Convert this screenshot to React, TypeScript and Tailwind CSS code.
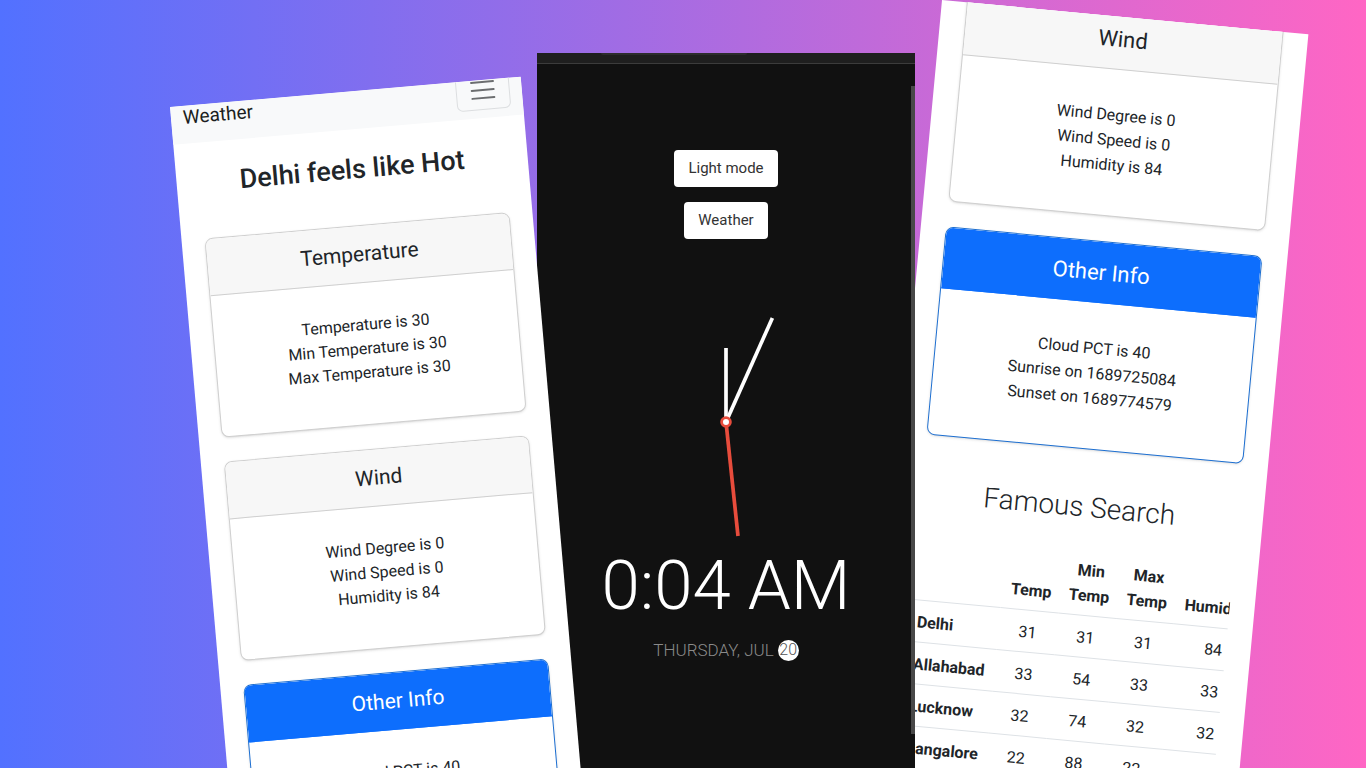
import type { ReactNode } from "react";

type Tone = "light" | "primary";

const tones: Record<Tone, { card: string; header: string }> = {
  light: { card: "border-[#cfcfcf]", header: "border-[#cfcfcf] bg-[#f7f7f7] text-[#212529]" },
  primary: { card: "border-[#1d6fd1]", header: "border-[#0d6efd] bg-[#0d6efd] text-white" },
};

const wind = ["Wind Degree is 0", "Wind Speed is 0", "Humidity is 84"];
const temperature = ["Temperature is 30", "Min Temperature is 30", "Max Temperature is 30"];
const other = ["Cloud PCT is 40", "Sunrise on 1689725084", "Sunset on 1689774579"];

const cities = [
  { name: "Delhi", values: [31, 31, 31, 84] },
  { name: "Allahabad", values: [33, 54, 33, 33] },
  { name: "Lucknow", values: [32, 74, 32, 32] },
  { name: "Bangalore", values: [22, 88, 22, 22] },
];

function InfoCard({ title, lines, tone = "light" }: { title: string; lines: string[]; tone?: Tone }) {
  return (
    <article className={`overflow-hidden rounded-lg border bg-white text-center shadow-sm ${tones[tone].card}`}>
      <h2 className={`border-b py-3 text-[21px] leading-8 ${tones[tone].header}`}>{title}</h2>
      <ul className="pt-[30px] pb-[39px] text-base leading-6">
        {lines.map((line) => (
          <li key={line}>{line}</li>
        ))}
      </ul>
    </article>
  );
}

function LargeInfoCard({ title, lines, tone = "light" }: { title: string; lines: string[]; tone?: Tone }) {
  return (
    <article className={`overflow-hidden rounded-lg border bg-white text-center shadow-sm ${tones[tone].card}`}>
      <h2 className={`border-b pt-[13px] pb-[11px] text-[22px] leading-9 ${tones[tone].header}`}>{title}</h2>
      <ul className="pt-[33px] pb-[38px] text-base leading-[25px]">
        {lines.map((line) => (
          <li key={line}>{line}</li>
        ))}
      </ul>
    </article>
  );
}

function Screen({ className, children }: { className: string; children: ReactNode }) {
  return <section className={`absolute overflow-hidden ${className}`}>{children}</section>;
}

function WeatherScreen() {
  return (
    <Screen className="top-[107px] left-[170px] z-20 h-[760px] w-[352px] origin-top-left rotate-[-4.95deg] bg-white">
      <nav className="flex h-[38px] items-end justify-between overflow-hidden bg-[#f8f9fa] px-3 pb-2">
        <a href="#weather" className="flex h-10 items-center pt-1 text-[19px] leading-6 text-[#1b1e21]">
          Weather
        </a>
        <button
          type="button"
          aria-label="Toggle navigation"
          className="flex h-10 w-[54px] items-center justify-center rounded-md border border-[#dcdee0]"
        >
          <svg className="h-[30px] w-[30px]" viewBox="0 0 30 30" fill="none" stroke="#6b6d6f" strokeWidth="2" strokeLinecap="round">
            <path d="M4 7h22M4 15h22M4 23h22" />
          </svg>
        </button>
      </nav>
      <h1 className="pt-5 text-center text-[27px] leading-10 font-medium">Delhi feels like Hot</h1>
      <div className="flex flex-col gap-6 px-[23px] pt-9">
        <InfoCard title="Temperature" lines={temperature} />
        <InfoCard title="Wind" lines={wind} />
        <InfoCard title="Other Info" lines={other} tone="primary" />
      </div>
    </Screen>
  );
}

function ClockScreen() {
  return (
    <Screen className="top-[53px] bottom-0 left-[537px] z-10 w-[378px] bg-[#111111]">
      <div className="h-[11px] overflow-hidden border-b border-[#3c3c3c] bg-[#1f1f1f] pl-16">
        <div className="h-[2px] w-[146px] rounded-b-full bg-[#2d2d2d]" />
      </div>
      <div className="absolute top-[33px] right-0 h-[648px] w-1 bg-[#484848]" />
      <div className="flex flex-col items-center pt-[86px]">
        <div className="flex flex-col items-center gap-[15px]">
          <button type="button" className="h-[37px] rounded bg-white px-[14px] text-[15px] text-[#333333]">
            Light mode
          </button>
          <button type="button" className="h-[37px] rounded bg-white px-[14px] text-[15px] text-[#333333]">
            Weather
          </button>
        </div>
        <svg className="mt-[63px] h-60 w-60" viewBox="0 0 240 240" role="img" aria-label="Analog clock">
          <g strokeWidth="3.7" fill="none">
            <path d="M120 120V46" stroke="#ffffff" />
            <path d="M120 120L166.400 16" stroke="#ffffff" />
            <path d="M120 120L132 234" stroke="#e74c3c" />
          </g>
          <circle cx="120" cy="120" r="4.400" fill="#ffffff" stroke="#e74c3c" strokeWidth="2.800" />
        </svg>
        <time className="mt-1 text-[69px] leading-20 font-light text-white">0:04 AM</time>
        <p className="mt-3 flex items-center gap-1 text-[17px] leading-6 font-light text-[#8a8a8a]">
          THURSDAY, JUL
          <span className="flex h-[21px] w-[21px] items-center justify-center rounded-full bg-white text-base text-[#555555]">
            20
          </span>
        </p>
      </div>
    </Screen>
  );
}

function SearchScreen() {
  return (
    <Screen className="top-0 left-[942px] z-0 h-[820px] w-[368px] origin-top-left rotate-[5.35deg] bg-white">
      <div className="-mt-[9px] flex flex-col gap-[25px] px-[25px]">
        <LargeInfoCard title="Wind" lines={wind} />
        <LargeInfoCard title="Other Info" lines={other} tone="primary" />
      </div>
      <h2 className="pt-9 text-center text-[28px] leading-[44px] font-light">Famous Search</h2>
      <div className="mx-[25px] mt-[19px] overflow-hidden">
        <table className="w-[347px] table-fixed border-collapse text-base leading-[25px]">
          <colgroup>
            <col className="w-[90px]" />
            <col className="w-[58px]" />
            <col className="w-[58px]" />
            <col className="w-[58px]" />
            <col className="w-[83px]" />
          </colgroup>
          <thead>
            <tr className="border-b border-[#dee2e6] align-bottom">
              <td />
              {["Temp", "Min Temp", "Max Temp", "Humidity"].map((name) => (
                <th key={name} scope="col" className="px-2 pt-[9px] pb-[7px] text-center font-bold">
                  {name}
                </th>
              ))}
            </tr>
          </thead>
          <tbody>
            {cities.map((city) => (
              <tr key={city.name} className="border-b border-[#dee2e6]">
                <th scope="row" className="px-2 pt-[9px] pb-[7px] text-left font-bold">
                  {city.name}
                </th>
                {city.values.map((value, index) => (
                  <td key={index} className="px-2 pt-[9px] pb-[7px] text-center">
                    {value}
                  </td>
                ))}
              </tr>
            ))}
          </tbody>
        </table>
      </div>
    </Screen>
  );
}

export default function App() {
  return (
    <main className="relative h-screen w-full overflow-hidden bg-[linear-gradient(90deg,#5271ff,#ff66c4)] font-[Roboto,'Noto_Sans',sans-serif] text-[#212529]">
      <SearchScreen />
      <ClockScreen />
      <WeatherScreen />
    </main>
  );
}
